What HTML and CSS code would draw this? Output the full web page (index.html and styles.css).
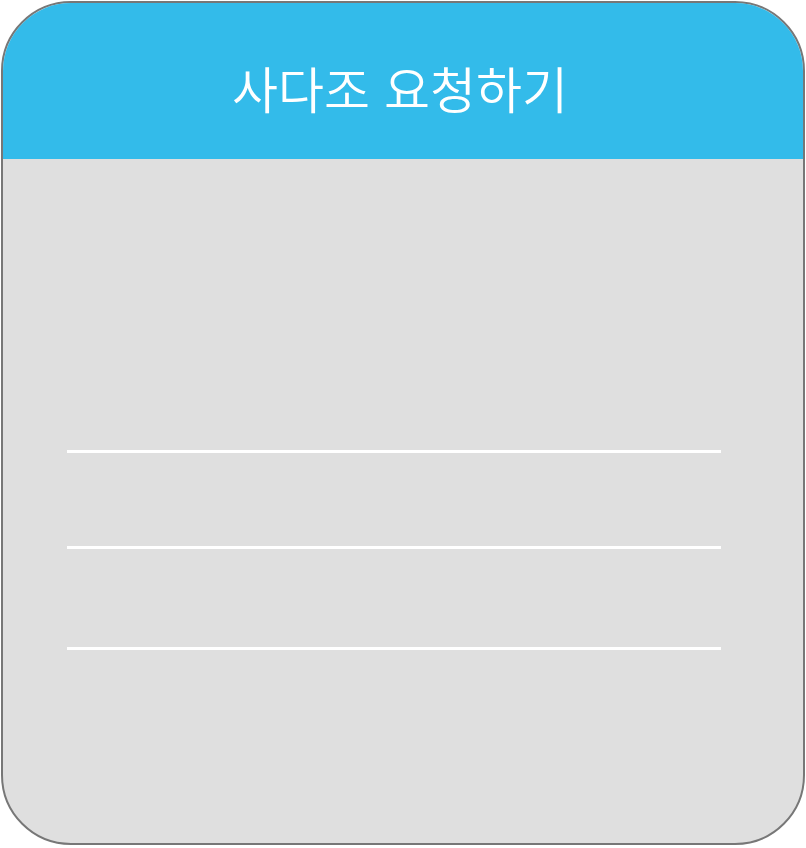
FILE: index.html
```html
<!DOCTYPE html>
<html lang="ko">
<head>
<meta charset="utf-8">
<title>사다조 요청하기</title>
<link rel="stylesheet" href="styles.css">
</head>
<body>
<div class="card">
  <div class="card-header">
    <h1 class="title">사다조 요청하기</h1>
  </div>
  <div class="card-body">
    <div class="field"></div>
    <div class="field field-2"></div>
    <div class="field field-3"></div>
  </div>
</div>
</body>
</html>
```
FILE: styles.css
```css
html, body {
  margin: 0;
  padding: 0;
  background: #ffffff;
}
body {
  padding: 1px;
}
.card {
  width: 804px;
  height: 844px;
  box-sizing: border-box;
  border: 2.5px solid #777777;
  border-radius: 70px;
  overflow: hidden;
  background: #dfdfdf;
  display: flex;
  flex-direction: column;
}
.card-header {
  height: 155.5px;
  flex: none;
  background: #33bbea;
  display: flex;
  align-items: center;
  justify-content: center;
}
.title {
  margin: 0;
  padding-top: 12px;
  padding-right: 6px;
  color: #ffffff;
  font-family: "Noto Sans CJK KR", "Noto Sans", sans-serif;
  font-weight: 350;
  font-size: 50px;
  letter-spacing: 0;
}
.card-body {
  padding: 291px 0 0 63.5px;
  display: flex;
  flex-direction: column;
}
.field {
  width: 654px;
  height: 3px;
  background: #ffffff;
}
.field-2 {
  margin-top: 93px;
}
.field-3 {
  margin-top: 98px;
}
```
